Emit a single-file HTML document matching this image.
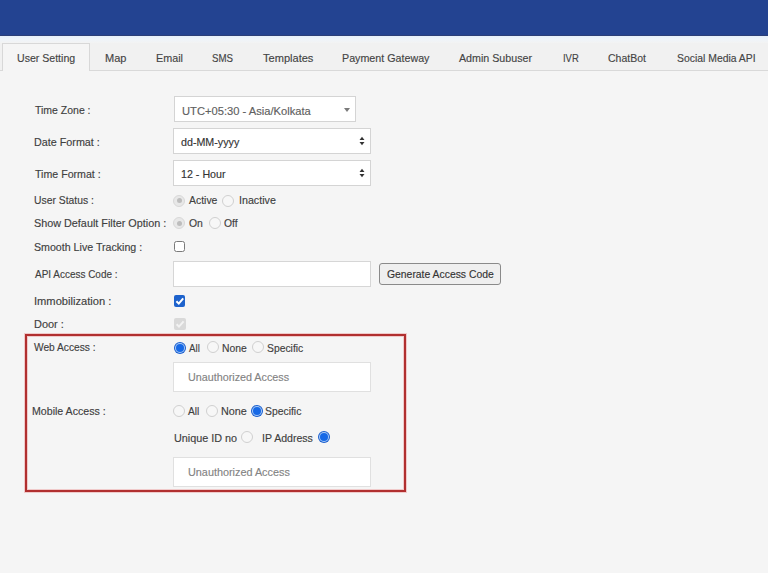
<!DOCTYPE html>
<html><head><meta charset="utf-8">
<style>
html,body{margin:0;padding:0;}
body{width:768px;height:573px;overflow:hidden;background:#f5f5f5;position:relative;font-family:"Liberation Sans",sans-serif;}
.a{position:absolute;}
.t{position:absolute;font-size:11.5px;line-height:12px;-webkit-text-stroke:0.15px currentColor;white-space:nowrap;color:#3d3d3d;transform-origin:0 0;}
.hdr{left:0;top:0;width:768px;height:35px;background:#234391;border-bottom:1px solid #2b3f78;}
.gap{left:0;top:36px;width:768px;height:7px;background:linear-gradient(#e6f0fa,#eef4fa 40%,#f3f3f3);}
.tabbar{left:0;top:43px;width:768px;height:27px;background:#f1f1f1;border-bottom:1px solid #d9d9d9;}
.tab{left:2px;top:43px;width:88px;height:28px;background:#f5f5f5;border:1px solid #d8d8d8;border-bottom:none;box-sizing:border-box;}
.box{background:#fff;border:1px solid #d6d6d6;box-sizing:border-box;}
.sel{background:#fff;border:1px solid #d4d4d4;box-sizing:border-box;}
.rd{position:absolute;width:12px;height:12px;border-radius:50%;border:1px solid #d0d0d0;background:#f7f7f7;box-sizing:border-box;}
.rdd{position:absolute;width:12px;height:12px;border-radius:50%;border:1px solid #d8d8d8;background:#e8e8e8;box-sizing:border-box;}
.rdd:after{content:"";position:absolute;left:2.5px;top:2.5px;width:5px;height:5px;border-radius:50%;background:#bdbdbd;}
.rb{position:absolute;width:12px;height:12px;border-radius:50%;background:#1b5fcf;box-sizing:border-box;}
.rb:before{content:"";position:absolute;left:1px;top:1px;width:10px;height:10px;border-radius:50%;background:#a9cbf7;}
.rb:after{content:"";position:absolute;left:2px;top:2px;width:8px;height:8px;border-radius:50%;background:#1769e6;}
</style></head><body>
<div class="a hdr"></div>
<div class="a gap"></div>
<div class="a tabbar"></div>
<div class="a tab"></div>

<!-- selects -->
<div class="a sel" style="left:174px;top:96px;width:182px;height:26px"></div>
<svg class="a" style="left:343px;top:107px" width="8" height="6"><path d="M1 1 L7 1 L4 5 Z" fill="#7a7a7a"/></svg>
<div class="a sel" style="left:173px;top:128px;width:198px;height:26px"></div>
<svg class="a" style="left:358px;top:136px" width="8" height="10"><path d="M1.5 4 L6.5 4 L4 0.8 Z M1.5 6 L6.5 6 L4 9.2 Z" fill="#333"/></svg>
<div class="a sel" style="left:173px;top:160px;width:198px;height:26px"></div>
<svg class="a" style="left:358px;top:168px" width="8" height="10"><path d="M1.5 4 L6.5 4 L4 0.8 Z M1.5 6 L6.5 6 L4 9.2 Z" fill="#333"/></svg>

<!-- user status / filter radios -->
<div class="rdd" style="left:173.4px;top:194.9px"></div>
<div class="rd" style="left:221.9px;top:194.9px"></div>
<div class="rdd" style="left:173.4px;top:217.3px"></div>
<div class="rd" style="left:208.5px;top:217.3px"></div>

<!-- smooth checkbox -->
<div class="a" style="left:174px;top:240.5px;width:11px;height:11.5px;border:1px solid #7a7a7a;border-radius:2.5px;box-sizing:border-box;background:#fff"></div>

<!-- api -->
<div class="a box" style="left:173px;top:261px;width:198px;height:26px"></div>
<div class="a" style="left:379px;top:263px;width:122px;height:22px;border:1px solid #8a8a8a;border-radius:3px;background:#efefef;box-sizing:border-box"></div>

<!-- immobilization -->
<div class="a" style="left:174px;top:295px;width:11px;height:12px;border-radius:2px;background:#1d62cc"></div>
<svg class="a" style="left:174px;top:295px" width="12" height="12"><path d="M2.4 6.2 L4.8 8.6 L9.2 3.4" stroke="#fff" stroke-width="2" fill="none"/></svg>
<!-- door -->
<div class="a" style="left:174px;top:318px;width:12px;height:12px;border-radius:2px;background:#d9d9d9"></div>
<svg class="a" style="left:174px;top:318px" width="12" height="12"><path d="M2.6 6.2 L5 8.6 L9.6 3.4" stroke="#f2f2f2" stroke-width="2" fill="none"/></svg>

<!-- red box -->
<div class="a" style="left:25px;top:334px;width:381px;height:158px;border:2px solid #b12f2f;box-shadow:0 0 0 1px rgba(235,150,150,.45),inset 0 0 0 1px rgba(235,150,150,.45);box-sizing:border-box"></div>

<!-- web access -->
<div class="rb" style="left:174px;top:341.5px"></div>
<div class="rd" style="left:206.5px;top:341.1px"></div>
<div class="rd" style="left:252.1px;top:341.1px"></div>
<div class="a box" style="left:173px;top:362px;width:198px;height:30px;border-color:#e0e0e0"></div>

<!-- mobile access -->
<div class="rd" style="left:172.9px;top:405px"></div>
<div class="rd" style="left:205.5px;top:405px"></div>
<div class="rb" style="left:250.6px;top:405.4px"></div>
<div class="rd" style="left:241.1px;top:431.4px"></div>
<div class="rb" style="left:317.6px;top:431.4px"></div>
<div class="a box" style="left:173px;top:457px;width:198px;height:30px;border-color:#e0e0e0"></div>

<!-- texts -->
<div class="t" style="left:17.23px;top:52px;transform:scaleX(0.919);color:#444">User Setting</div>
<div class="t" style="left:105.41px;top:52px;transform:scaleX(0.9591);color:#444">Map</div>
<div class="t" style="left:156.23px;top:52px;transform:scaleX(0.9357);color:#444">Email</div>
<div class="t" style="left:211.82px;top:52px;transform:scaleX(0.844);color:#444">SMS</div>
<div class="t" style="left:262.61px;top:52px;transform:scaleX(0.9615);color:#444">Templates</div>
<div class="t" style="left:342.03px;top:52px;transform:scaleX(0.9309);color:#444">Payment Gateway</div>
<div class="t" style="left:459.42px;top:52px;transform:scaleX(0.9278);color:#444">Admin Subuser</div>
<div class="t" style="left:562.64px;top:52px;transform:scaleX(0.8211);color:#444">IVR</div>
<div class="t" style="left:608.38px;top:52px;transform:scaleX(0.9119);color:#444">ChatBot</div>
<div class="t" style="left:676.57px;top:52px;transform:scaleX(0.9046);color:#444">Social Media API</div>
<div class="t" style="left:34.76px;top:104px;transform:scaleX(0.9115);color:#404040">Time Zone :</div>
<div class="t" style="left:33.84px;top:136px;transform:scaleX(0.9362);color:#404040">Date Format :</div>
<div class="t" style="left:34.77px;top:168px;transform:scaleX(0.9239);color:#404040">Time Format :</div>
<div class="t" style="left:33.86px;top:194px;transform:scaleX(0.9);color:#404040">User Status :</div>
<div class="t" style="left:33.84px;top:217px;transform:scaleX(0.94);color:#404040">Show Default Filter Option :</div>
<div class="t" style="left:33.84px;top:241px;transform:scaleX(0.925);color:#404040">Smooth Live Tracking :</div>
<div class="t" style="left:34.75px;top:268px;transform:scaleX(0.8663);color:#404040">API Access Code :</div>
<div class="t" style="left:33.82px;top:295px;transform:scaleX(0.9684);color:#404040">Immobilization :</div>
<div class="t" style="left:33.83px;top:318px;transform:scaleX(0.9533);color:#404040">Door :</div>
<div class="t" style="left:34.13px;top:341px;transform:scaleX(0.8857);color:#404040">Web Access :</div>
<div class="t" style="left:32.04px;top:405px;transform:scaleX(0.9228);color:#404040">Mobile Access :</div>
<div class="t" style="left:182.39px;top:105px;transform:scaleX(0.9707);color:#606060">UTC+05:30 - Asia/Kolkata</div>
<div class="t" style="left:181.0px;top:136px;transform:scaleX(0.9302);color:#333">dd-MM-yyyy</div>
<div class="t" style="left:181.0px;top:168px;transform:scaleX(0.9292);color:#333">12 - Hour</div>
<div class="t" style="left:189.43px;top:194px;transform:scaleX(0.9065);color:#404040">Active</div>
<div class="t" style="left:238.52px;top:194px;transform:scaleX(0.9295);color:#404040">Inactive</div>
<div class="t" style="left:189.43px;top:217px;transform:scaleX(0.9067);color:#404040">On</div>
<div class="t" style="left:224.0px;top:217px;transform:scaleX(0.9);color:#404040">Off</div>
<div class="t" style="left:386.76px;top:268px;transform:scaleX(0.9025);color:#333">Generate Access Code</div>
<div class="t" style="left:189.37px;top:342px;transform:scaleX(0.8462);color:#404040">All</div>
<div class="t" style="left:222.38px;top:342px;transform:scaleX(0.9);color:#404040">None</div>
<div class="t" style="left:267.0px;top:342px;transform:scaleX(0.9);color:#404040">Specific</div>
<div class="t" style="left:187.84px;top:371px;transform:scaleX(0.9352);color:#838383">Unauthorized Access</div>
<div class="t" style="left:187.62px;top:405px;transform:scaleX(0.8846);color:#404040">All</div>
<div class="t" style="left:220.61px;top:405px;transform:scaleX(0.9407);color:#404040">None</div>
<div class="t" style="left:265.43px;top:405px;transform:scaleX(0.9025);color:#404040">Specific</div>
<div class="t" style="left:173.81px;top:432px;transform:scaleX(0.9403);color:#404040">Unique ID no</div>
<div class="t" style="left:261.85px;top:432px;transform:scaleX(0.9182);color:#404040">IP Address</div>
<div class="t" style="left:188.39px;top:466px;transform:scaleX(0.9426);color:#838383">Unauthorized Access</div></body></html>
